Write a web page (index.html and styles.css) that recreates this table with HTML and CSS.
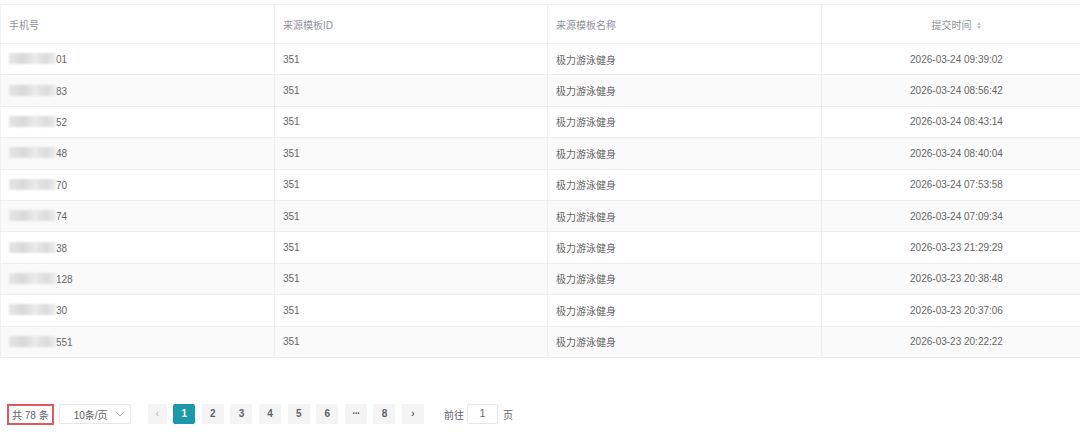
FILE: index.html
```html
<!DOCTYPE html>
<html lang="zh-CN">
<head>
  <meta charset="UTF-8" />
  <title>提交记录</title>
  <link rel="stylesheet" href="styles.css">
</head>
<body>
  <table class="records">
    <thead>
      <tr>
        <th class="col-phone">手机号</th>
        <th class="col-id">来源模板ID</th>
        <th class="col-name">来源模板名称</th>
        <th class="col-time">提交时间 <span class="sort"><i class="up"></i><i class="down"></i></span></th>
      </tr>
    </thead>
    <tbody>
      <tr><td><span class="mask"></span>01</td><td>351</td><td>极力游泳健身</td><td class="center">2026-03-24 09:39:02</td></tr>
      <tr><td><span class="mask"></span>83</td><td>351</td><td>极力游泳健身</td><td class="center">2026-03-24 08:56:42</td></tr>
      <tr><td><span class="mask"></span>52</td><td>351</td><td>极力游泳健身</td><td class="center">2026-03-24 08:43:14</td></tr>
      <tr><td><span class="mask"></span>48</td><td>351</td><td>极力游泳健身</td><td class="center">2026-03-24 08:40:04</td></tr>
      <tr><td><span class="mask"></span>70</td><td>351</td><td>极力游泳健身</td><td class="center">2026-03-24 07:53:58</td></tr>
      <tr><td><span class="mask"></span>74</td><td>351</td><td>极力游泳健身</td><td class="center">2026-03-24 07:09:34</td></tr>
      <tr><td><span class="mask"></span>38</td><td>351</td><td>极力游泳健身</td><td class="center">2026-03-23 21:29:29</td></tr>
      <tr><td><span class="mask"></span>128</td><td>351</td><td>极力游泳健身</td><td class="center">2026-03-23 20:38:48</td></tr>
      <tr><td><span class="mask"></span>30</td><td>351</td><td>极力游泳健身</td><td class="center">2026-03-23 20:37:06</td></tr>
      <tr><td><span class="mask"></span>551</td><td>351</td><td>极力游泳健身</td><td class="center">2026-03-23 20:22:22</td></tr>
    </tbody>
  </table>

  <div class="pager">
    <span class="total">共 78 条</span>
    <span class="sizes">10条/页 <svg class="caret" width="8" height="5" viewBox="0 0 8 5"><path d="M0.5 0.5 L4 4 L7.5 0.5" fill="none" stroke="#c0c4cc" stroke-width="1"/></svg></span>
    <ul class="pages">
      <li class="btn disabled">&lsaquo;</li>
      <li class="btn active">1</li>
      <li class="btn">2</li>
      <li class="btn">3</li>
      <li class="btn">4</li>
      <li class="btn">5</li>
      <li class="btn">6</li>
      <li class="btn more">···</li>
      <li class="btn">8</li>
      <li class="btn">&rsaquo;</li>
    </ul>
    <span class="jump">前往 <span class="jump-input">1</span> 页</span>
  </div>
</body>
</html>
```

FILE: styles.css
```css
body {
  margin: 0;
  padding-top: 4px;
  background: #fff;
  font-family: "Liberation Sans", "Noto Sans CJK SC", sans-serif;
  font-size: 10px;
  color: #666;
}

.records {
  width: 1100px;
  border-collapse: collapse;
  table-layout: fixed;
  border-top: 1px solid #ebeef5;
  border-left: 1px solid #f2f2f2;
}

.records th,
.records td {
  padding: 0 8px;
  text-align: left;
  font-weight: normal;
  border-bottom: 1px solid #ebeef5;
  border-right: 1px solid #f0f0f0;
  white-space: nowrap;
}

.records th {
  height: 38px;
  color: #909399;
}

.records td {
  height: 30.4px;
}

.col-phone { width: 257px; }
.col-id { width: 256px; }
.col-name { width: 257px; }

.records .col-time,
.records .center {
  text-align: center;
  padding-right: 16px;
}

.records tbody tr:nth-child(even) td {
  background: #fafafa;
}

.mask {
  display: inline-block;
  width: 47px;
  height: 11px;
  vertical-align: -1px;
  background: linear-gradient(90deg, #e6e6e6, #d9d9d9 30%, #eaeaea 55%, #dcdcdc 80%, #eeeeee);
  filter: blur(1.2px);
}

.sort {
  display: inline-flex;
  flex-direction: column;
  gap: 1px;
  margin-left: 3px;
  vertical-align: middle;
}

.sort i {
  width: 0;
  height: 0;
  border-left: 2.5px solid transparent;
  border-right: 2.5px solid transparent;
}

.sort .up { border-bottom: 3px solid #c0c4cc; }
.sort .down { border-top: 3px solid #c0c4cc; }

.pager {
  display: flex;
  align-items: center;
  margin-top: 46px;
  padding-left: 7px;
  height: 21px;
}

.total {
  display: flex;
  align-items: center;
  height: 17px;
  padding: 0 3px;
  border: 2px solid #dd5a5e;
  color: #606266;
}

.sizes {
  display: flex;
  align-items: center;
  justify-content: space-between;
  box-sizing: border-box;
  width: 72px;
  height: 20px;
  margin-left: 5px;
  padding: 0 6px 0 14px;
  border: 1px solid #e6e8ec;
  border-radius: 2px;
  color: #606266;
}

.pages {
  display: flex;
  gap: 6.6px;
  list-style: none;
  margin: 0 0 0 17px;
  padding: 0;
}

.btn {
  width: 22px;
  height: 20px;
  line-height: 20px;
  text-align: center;
  background: #f4f4f5;
  border-radius: 2px;
  font-weight: bold;
  color: #606266;
}

.btn.disabled {
  width: 19px;
  color: #c0c4cc;
}

.btn.active {
  background: #1b98aa;
  color: #fff;
}

.btn.more {
  letter-spacing: -1px;
}

.jump {
  display: flex;
  align-items: center;
  margin-left: 20px;
  color: #606266;
}

.jump-input {
  box-sizing: border-box;
  width: 31px;
  height: 20px;
  margin: 0 5px 0 3px;
  border: 1px solid #e6e8ec;
  border-radius: 2px;
  line-height: 18px;
  text-align: center;
}
```
